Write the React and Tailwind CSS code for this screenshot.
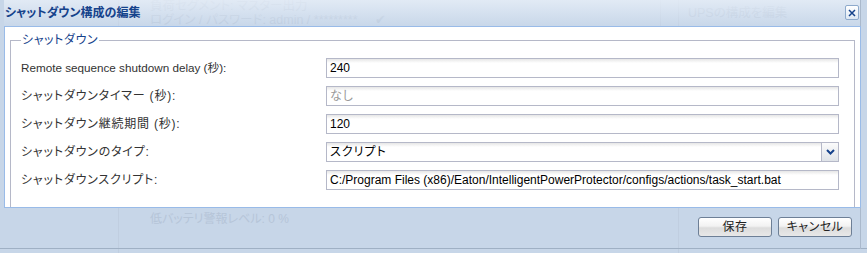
import React from "react";

const FONT = "font-['Liberation_Sans','Noto_Sans_CJK_JP',sans-serif] [font-feature-settings:'palt']";

function Field({ value, muted, jp }) {
  return (
    <div
      className={`h-[20px] w-[513px] border border-[#b5b8c8] bg-[linear-gradient(to_bottom,#e6e6e6,#ffffff_4px)] px-[3px] flex items-center text-[12px] ${
        muted ? "text-[#999]" : "text-black"
      } ${jp ? "tracking-[1px]" : ""}`}
    >
      {value}
    </div>
  );
}

function Combo({ value }) {
  return (
    <div className="h-[20px] w-[513px] flex border border-[#b5b8c8]">
      <div className="flex-1 bg-[linear-gradient(to_bottom,#e6e6e6,#ffffff_4px)] px-[3px] flex items-center text-[12px] text-black tracking-[1px]">
        {value}
      </div>
      <div className="w-[17px] border-l border-[#b5b8c8] bg-[linear-gradient(to_bottom,#fbfbfb,#dfe3e8)] flex items-center justify-center">
        <svg width="9" height="6" viewBox="0 0 9 6">
          <path d="M1 1 L4.5 4.5 L8 1" fill="none" stroke="#15428b" strokeWidth="2" />
        </svg>
      </div>
    </div>
  );
}

function Row({ label, latin, children }) {
  return (
    <div className="flex items-center h-[20px]">
      <div
        className={`w-[305px] text-[#333] ${
          latin ? "text-[11.7px]" : "text-[12px] tracking-[0.8px]"
        }`}
      >
        {label}
      </div>
      {children}
    </div>
  );
}

function Btn({ children }) {
  return (
    <div className="w-[74px] h-[20px] rounded-[3px] border border-[#6d7f96] bg-[linear-gradient(to_bottom,#ffffff,#f2f2f2_45%,#dcdcdc_55%,#e8e8e8)] flex items-center justify-center text-[12px] text-[#222] tracking-[0.5px]">
      {children}
    </div>
  );
}

export default function App() {
  return (
    <div className={`relative w-[867px] h-[253px] overflow-hidden bg-[#c7d6e8] ${FONT}`}>
      {/* faint content of the page behind the dialog */}
      <div className="absolute inset-0 pointer-events-none text-[#b6c5d8] text-[12.5px]">
        <div className="absolute left-[150px] top-[-3px]">負荷セグメント: マスター出力</div>
        <div className="absolute left-[150px] top-[11px]">ログイン / パスワード: admin / *********&nbsp;&nbsp;&nbsp;&nbsp;&nbsp;✔</div>
        <div className="absolute left-[688px] top-[4px]">UPSの構成を編集</div>
        <div className="absolute left-[150px] top-[210px] text-[12px]">低バッテリ警報レベル: 0 %</div>
        <div className="absolute left-[118px] top-[0px] h-full w-px bg-[#c0cee0]" />
        <div className="absolute left-[660px] top-[0px] h-[26px] w-px bg-[#c0cee0]" />
        <div className="absolute left-[678px] top-[0px] h-full w-px bg-[#c0cee0]" />
        <div className="absolute left-0 top-[248px] w-full h-px bg-[#9fb0c4]" />
      </div>

      <div className="relative flex flex-col w-[861px] h-[249px] pl-[4px] border-r border-[#aab9cc]">
        {/* header */}
        <div className="h-[26px] flex items-center justify-between pr-[1px] bg-[linear-gradient(to_bottom,rgba(232,239,248,0.8),rgba(203,218,236,0.35))]">
          <div className="text-[12px] font-bold text-[#15428b] pl-[1px]">シャットダウン構成の編集</div>
          <div className="w-[14px] h-[15px] mb-[1px] border border-[#8eaacc] rounded-[2px] bg-[linear-gradient(to_bottom,#ffffff,#dde8f4)] flex items-center justify-center">
            <svg width="8" height="8" viewBox="0 0 8 8">
              <path d="M1 1 L7 7 M7 1 L1 7" stroke="#15428b" strokeWidth="1.5" />
            </svg>
          </div>
        </div>

        {/* body */}
        <div className="w-[857px] h-[182px] bg-white border border-[#99bbe8] px-[5px] pt-[6px] overflow-hidden">
          <fieldset className="border border-[#b5b8c8] pl-[10px] pr-[15px] pt-[11px] pb-[20px]">
            <legend className="px-[1px] text-[12px] leading-[14px] text-[#15428b] tracking-[0.6px]">シャットダウン</legend>
            <div className="flex flex-col gap-[8px]">
              <Row label="Remote sequence shutdown delay (秒):" latin>
                <Field value="240" />
              </Row>
              <Row label="シャットダウンタイマー (秒):">
                <Field value="なし" muted jp />
              </Row>
              <Row label="シャットダウン継続期間 (秒):">
                <Field value="120" />
              </Row>
              <Row label="シャットダウンのタイプ:">
                <Combo value="スクリプト" />
              </Row>
              <Row label="シャットダウンスクリプト:">
                <Field value="C:/Program Files (x86)/Eaton/IntelligentPowerProtector/configs/actions/task_start.bat" />
              </Row>
            </div>
          </fieldset>
        </div>

        {/* footer */}
        <div className="flex justify-end gap-[6px] pt-[9px] pr-[8px]">
          <Btn>保存</Btn>
          <Btn>キャンセル</Btn>
        </div>
      </div>
    </div>
  );
}
